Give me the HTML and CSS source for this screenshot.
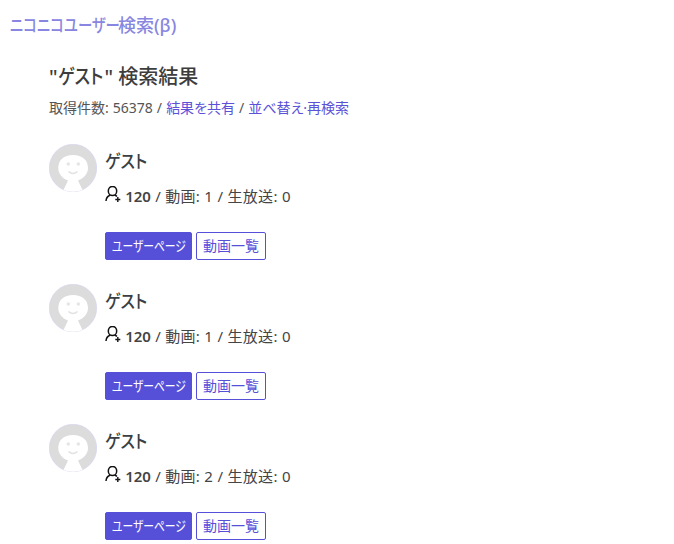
FILE: index.html
```html
<!DOCTYPE html>
<html lang="ja">
<head>
<meta charset="utf-8">
<title>ニコニコユーザー検索(β)</title>
<link rel="stylesheet" href="styles.css">
</head>
<body>
<header class="site-head"><a class="brand"><span class="kana">ニコニコユーザー</span>検索(β)</a></header>
<main class="content">
  <h1 class="result-title">"<span class="kana">ゲスト</span>" 検索結果</h1>
  <p class="result-meta">取得件数: 56378 / <a class="link">結果を共有</a> / <a class="link">並べ替え·再検索</a></p>
  <article class="user">
    <svg class="avatar" viewBox="0 0 48 48"><use href="#face"/></svg>
    <div class="info">
      <h2 class="name"><span class="kana">ゲスト</span></h2>
      <p class="stats"><svg class="follow" viewBox="0 0 16 16"><use href="#person"/></svg> <b>120</b> / 動画: 1 / 生放送: 0</p>
      <div class="actions"><a class="btn primary"><span class="kana">ユーザーページ</span></a><a class="btn outline">動画一覧</a></div>
    </div>
  </article>
  <article class="user">
    <svg class="avatar" viewBox="0 0 48 48"><use href="#face"/></svg>
    <div class="info">
      <h2 class="name"><span class="kana">ゲスト</span></h2>
      <p class="stats"><svg class="follow" viewBox="0 0 16 16"><use href="#person"/></svg> <b>120</b> / 動画: 1 / 生放送: 0</p>
      <div class="actions"><a class="btn primary"><span class="kana">ユーザーページ</span></a><a class="btn outline">動画一覧</a></div>
    </div>
  </article>
  <article class="user">
    <svg class="avatar" viewBox="0 0 48 48"><use href="#face"/></svg>
    <div class="info">
      <h2 class="name"><span class="kana">ゲスト</span></h2>
      <p class="stats"><svg class="follow" viewBox="0 0 16 16"><use href="#person"/></svg> <b>120</b> / 動画: 2 / 生放送: 0</p>
      <div class="actions"><a class="btn primary"><span class="kana">ユーザーページ</span></a><a class="btn outline">動画一覧</a></div>
    </div>
  </article>
</main>
<svg class="defs" width="0" height="0">
  <symbol id="face" viewBox="0 0 48 48">
    <circle cx="24" cy="24" r="23.700" fill="#dcdcdc" stroke="#d4d2f2" stroke-width=".6"/>
    <path d="M14.500 46 L19 36.500 C13 34.500 9.300 29.500 9.300 24 C9.300 16 15 11 24 11 C33 11 39 16 39 24 C39 29.500 35 34.500 29 36.500 L33.500 46 Q24 49.500 14.500 46 Z" fill="#fff"/>
    <circle cx="19.300" cy="20" r="1.800" fill="#e6e6e6"/>
    <circle cx="29.300" cy="20" r="1.800" fill="#e6e6e6"/>
    <path d="M19.500 27.500 Q24 31.500 28.500 27.500" stroke="#e2e2e2" stroke-width="1.500" fill="none"/>
  </symbol>
  <symbol id="person" viewBox="0 0 16 16">
    <ellipse cx="7.500" cy="5" rx="4.200" ry="4.600" fill="none" stroke="#111" stroke-width="1.500"/>
    <path d="M1 15 C1.200 12 2.800 10 5 9.200 M10 9.200 C10.800 9.500 11.500 10 12 10.500" fill="none" stroke="#111" stroke-width="1.500"/>
    <path d="M12.800 11 V16 M10.300 13.500 H15.300" stroke="#111" stroke-width="1.400"/>
  </symbol>
</svg>
</body>
</html>
```
FILE: styles.css
```css
html, body { margin: 0; padding: 0; }
body {
  font-family: "Noto Sans", "Noto Sans CJK JP", sans-serif;
  font-size: 14px;
  color: #444;
  background: #fff;
  font-feature-settings: "palt";
  overflow: hidden;
  height: 544px;
}
a { text-decoration: none; }
.kana { display: inline-block; white-space: nowrap; transform-origin: 0 50%; }
.site-head { padding: 13px 10px 0; height: 36px; box-sizing: border-box; }
.brand { display: block; font-size: 18px; font-weight: 500; line-height: 24px; color: #8886e0; }
.brand .kana { width: 108px; transform: scaleX(.8); }
.content { padding: 26px 0 0 49px; }
.result-title { margin: 0; font-size: 20px; font-weight: 500; line-height: 30px; color: #3d3d3d; }
.result-title .kana { width: 47px; transform: scaleX(.86); }
.result-meta { margin: 6px 0 0; font-size: 14px; line-height: 20px; color: #555; word-spacing: .4px; }
.link { color: #5b52d8; }
.user { display: flex; gap: 8px; height: 140px; }
.result-meta + .user { margin-top: 26px; }
.avatar { width: 48px; height: 48px; flex: none; }
.info { flex: 1; }
.name { margin: 5px 0 0; font-size: 18px; font-weight: 500; line-height: 24px; color: #3a3f44; }
.name .kana { width: 43px; transform: scaleX(.89); }
.stats { margin: 12px 0 0; font-size: 15px; line-height: 22px; color: #444; letter-spacing: .3px; }
.stats b { font-weight: 600; letter-spacing: 0; }
.follow { width: 16px; height: 16px; vertical-align: 0; }
.actions { display: flex; gap: 4px; margin-top: 25px; }
.btn { display: block; box-sizing: border-box; height: 28px; line-height: 26px; padding: 0 6px; font-size: 14px; border: 1px solid #5650d8; border-radius: 2px; }
.primary { background: #5650d8; color: #fff; width: 87px; }
.primary .kana { transform: scaleX(.77); }
.outline { background: #fff; color: #5650d8; }
.defs { position: absolute; }
```
